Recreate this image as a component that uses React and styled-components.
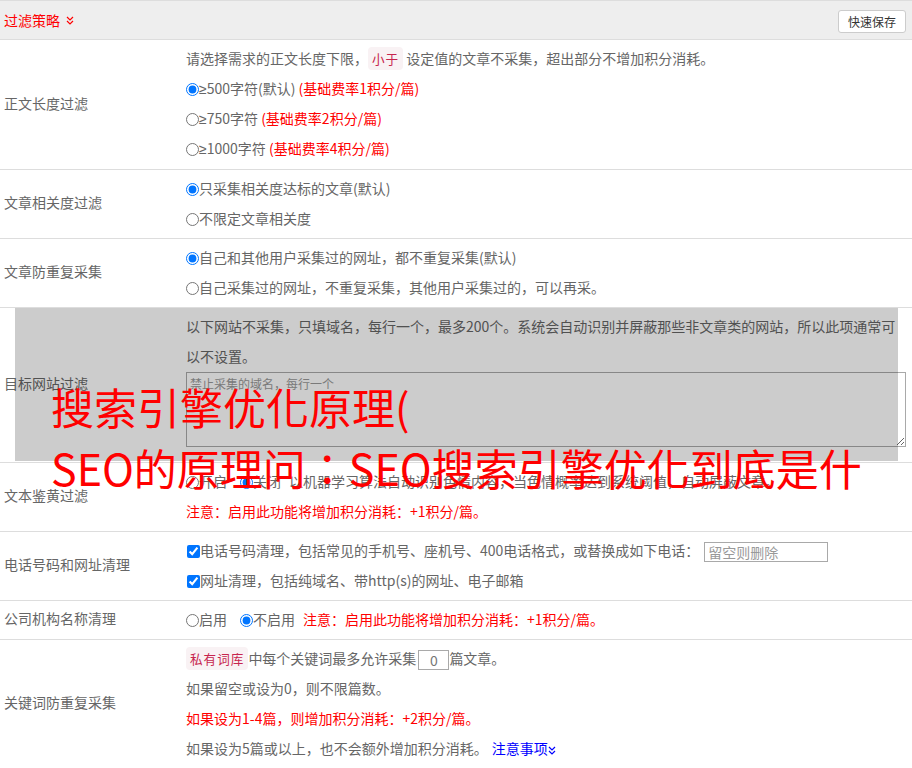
import React from 'react';
import styled, { createGlobalStyle } from 'styled-components';

const Global = createGlobalStyle`
  html, body { margin: 0; padding: 0; overflow: hidden; background: #fff; }
  body {
    font-family: "Noto Sans CJK SC", "Microsoft YaHei", sans-serif;
    font-size: 14px;
    color: #666;
  }
  * { box-sizing: border-box; }
`;

const Panel = styled.div`
  width: 912px;
  border-top: 1px solid #ddd;
`;

const Header = styled.div`
  height: 39px;
  background: #eee;
  border-bottom: 1px solid #ddd;
  display: flex;
  align-items: center;
  justify-content: space-between;
  padding: 0 6px 0 4px;
`;

const Title = styled.div`
  color: #f00;
  display: flex;
  align-items: center;
  gap: 6px;
  line-height: 20px;
`;

const SaveButton = styled.button`
  height: 23px;
  padding: 0 9px;
  font-family: inherit;
  font-size: 12px;
  color: #333;
  background: #fff;
  border: 1px solid #ccc;
  border-radius: 3px;
  margin-top: 3px;
`;

const Row = styled.div`
  position: ${(p) => (p.$relative ? 'relative' : 'static')};
  display: grid;
  grid-template-columns: 186px 1fr;
  border-bottom: 1px solid #ddd;
`;

const Label = styled.div`
  align-self: center;
  padding: 0 0 4px 4px;
  line-height: 30px;
`;

const Content = styled.div`
  padding: 3px 6px ${(p) => p.$pb || 5}px 0;
  line-height: 30px;
`;

const Line = styled.div`
  height: 30px;
  line-height: 30px;
  white-space: nowrap;
`;

const WrapLine = styled.div`
  line-height: 30px;
  white-space: normal;
`;

const Option = styled.label`
  margin-right: ${(p) => p.$gap || 0}px;
`;

const Ge = styled.span`
  font-family: "Liberation Sans", sans-serif;
  line-height: 1;
`;

const Radio = styled.input.attrs({ type: 'radio', readOnly: true })`
  margin: 0;
  width: 13px;
  height: 13px;
  vertical-align: -2px;
`;

const Check = styled.input.attrs({ type: 'checkbox', readOnly: true })`
  margin: 0 0 0 1px;
  width: 13px;
  height: 13px;
  vertical-align: -2px;
`;

const Red = styled.span`
  color: #f00;
`;

const Code = styled.span`
  background: #f9f2f4;
  color: #c7254e;
  padding: 2px 4px;
  border-radius: 4px;
  font-size: 90%;
  letter-spacing: 1px;
`;

const Area = styled.textarea`
  display: block;
  width: 100%;
  height: 75px;
  margin: 1px 0 10px;
  padding: 2px 3px;
  border: 1px solid #a9a9a9;
  font-family: inherit;
  font-size: 12px;
  line-height: 18px;
  color: #666;
  &::placeholder { color: #999; }
`;

const TextInput = styled.input`
  width: ${(p) => p.$w}px;
  height: 20px;
  padding: 0 3px;
  margin-left: ${(p) => p.$ml || 0}px;
  border: 1px solid #a9a9a9;
  font-family: inherit;
  font-size: 14px;
  color: #777;
  vertical-align: middle;
  text-align: ${(p) => (p.$center ? 'center' : 'left')};
  &::placeholder { color: #999; }
`;

const Link = styled.a`
  color: #00f;
  text-decoration: none;
  margin-left: 4px;
`;

const Shade = styled.div`
  position: absolute;
  left: 15px;
  right: 14px;
  top: 0;
  bottom: 1px;
  background: rgba(0, 0, 0, 0.2);
  pointer-events: none;
`;

const BigText = styled.div`
  position: absolute;
  left: 51px;
  top: 68px;
  z-index: 2;
  color: #f00;
  font-family: "Noto Sans CJK TC", "Noto Sans CJK SC", sans-serif;
  font-size: 43px;
  line-height: 61px;
  white-space: nowrap;
  pointer-events: none;
`;

const Chev = ({ color }) => (
  <svg width="8" height="9" viewBox="0 0 8 9" style={{ display: 'inline-block', verticalAlign: 'middle' }}>
    <path d="M1 1 L4 4 L7 1 M1 5 L4 8 L7 5" fill="none" stroke={color} strokeWidth="1.2" />
  </svg>
);

export default function App() {
  return (
    <>
      <Global />
      <Panel>
        <Header>
          <Title>
            过滤策略
            <Chev color="#f00" />
          </Title>
          <SaveButton>快速保存</SaveButton>
        </Header>

        <Row>
          <Label>正文长度过滤</Label>
          <Content $pb={6}>
            <Line>
              请选择需求的正文长度下限，<Code>小于</Code> 设定值的文章不采集，超出部分不增加积分消耗。
            </Line>
            <Line>
              <Option><Radio name="len" defaultChecked /><Ge>≥</Ge>500字符(默认) </Option>
              <Red>(基础费率1积分/篇)</Red>
            </Line>
            <Line>
              <Option><Radio name="len" /><Ge>≥</Ge>750字符 </Option>
              <Red>(基础费率2积分/篇)</Red>
            </Line>
            <Line>
              <Option><Radio name="len" /><Ge>≥</Ge>1000字符 </Option>
              <Red>(基础费率4积分/篇)</Red>
            </Line>
          </Content>
        </Row>

        <Row>
          <Label>文章相关度过滤</Label>
          <Content>
            <Line><Option><Radio name="rel" defaultChecked />只采集相关度达标的文章(默认)</Option></Line>
            <Line><Option><Radio name="rel" />不限定文章相关度</Option></Line>
          </Content>
        </Row>

        <Row>
          <Label>文章防重复采集</Label>
          <Content>
            <Line><Option><Radio name="dup" defaultChecked />自己和其他用户采集过的网址，都不重复采集(默认)</Option></Line>
            <Line><Option><Radio name="dup" />自己采集过的网址，不重复采集，其他用户采集过的，可以再采。</Option></Line>
          </Content>
        </Row>

        <Row $relative>
          <Label>目标网站过滤</Label>
          <Content>
            <WrapLine>
              以下网站不采集，只填域名，每行一个，最多200个。系统会自动识别并屏蔽那些非文章类的网站，所以此项通常可以不设置。
            </WrapLine>
            <Area placeholder="禁止采集的域名，每行一个" />
          </Content>
          <Shade />
          <BigText>
            <div>搜索引擎优化原理(</div>
            <div>SEO的原理问：SEO搜索引擎优化到底是什</div>
          </BigText>
        </Row>

        <Row>
          <Label>文本鉴黄过滤</Label>
          <Content>
            <Line>
              <Option $gap={13}><Radio name="porn" />开启</Option>
              <Option $gap={8}><Radio name="porn" defaultChecked />关闭</Option>
              以机器学习算法自动识别色情内容，当色情概率达到系统阈值，自动屏蔽文章。
            </Line>
            <Line><Red>注意：启用此功能将增加积分消耗：+1积分/篇。</Red></Line>
          </Content>
        </Row>

        <Row>
          <Label>电话号码和网址清理</Label>
          <Content>
            <Line>
              <Option><Check defaultChecked />电话号码清理，包括常见的手机号、座机号、400电话格式，或替换成如下电话：</Option>
              <TextInput $w={124} $ml={5} placeholder="留空则删除" />
            </Line>
            <Line>
              <Option><Check defaultChecked />网址清理，包括纯域名、带http(s)的网址、电子邮箱</Option>
            </Line>
          </Content>
        </Row>

        <Row>
          <Label>公司机构名称清理</Label>
          <Content>
            <Line>
              <Option $gap={13}><Radio name="org" />启用</Option>
              <Option $gap={8}><Radio name="org" defaultChecked />不启用</Option>
              <Red>注意：启用此功能将增加积分消耗：+1积分/篇。</Red>
            </Line>
          </Content>
        </Row>

        <Row>
          <Label>关键词防重复采集</Label>
          <Content>
            <Line>
              <Code>私有词库</Code>中每个关键词最多允许采集<TextInput $w={31} $ml={2} $center defaultValue="0" />篇文章。
            </Line>
            <Line>如果留空或设为0，则不限篇数。</Line>
            <Line><Red>如果设为1-4篇，则增加积分消耗：+2积分/篇。</Red></Line>
            <Line>
              如果设为5篇或以上，也不会额外增加积分消耗。
              <Link href="#">注意事项<Chev color="#00f" /></Link>
            </Line>
          </Content>
        </Row>
      </Panel>
    </>
  );
}
